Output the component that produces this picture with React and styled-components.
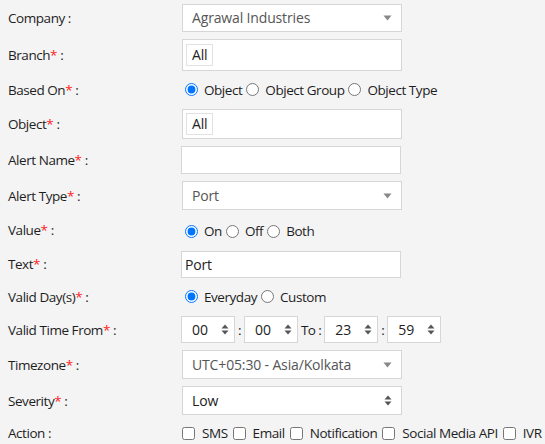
import React from "react";
import styled, { createGlobalStyle } from "styled-components";

const Global = createGlobalStyle`
  html, body { margin: 0; padding: 0; background: #f4f4f4; }
  body { font-family: "Open Sans", "Noto Sans", sans-serif; color: #222; }
  * { box-sizing: border-box; }
`;

const Form = styled.div`
  display: flex;
  flex-direction: column;
  gap: 7px;
  padding: 4px 0 0 8px;
  width: 545px;
  height: 444px;
  overflow: hidden;
`;

const Row = styled.div`
  display: grid;
  grid-template-columns: 174px 1fr;
  align-items: center;
  height: ${(p) => p.$h}px;
`;

const Label = styled.div`
  font-size: 13.5px;
  letter-spacing: -0.45px;
  color: #1e1e1e;
  white-space: nowrap;
`;

const Star = styled.span`
  color: #f22;
`;

const Box = styled.div`
  width: 220px;
  height: 100%;
  background: #fff;
  border: 1px solid #d6d6d6;
  display: flex;
  align-items: center;
  padding: 0 ${(p) => p.$pad ?? 9}px;
  font-size: 14px;
  letter-spacing: -0.15px;
  color: ${(p) => p.$color || "#555"};
  justify-content: space-between;
  margin-left: ${(p) => p.$ml ?? 0}px;
`;

const Tag = styled.div`
  height: 22px;
  padding: 0 5px;
  border: 1px solid #e2e2e2;
  background: #fff;
  display: flex;
  align-items: center;
  font-size: 14px;
  color: #222;
`;

const Choices = styled.div`
  display: flex;
  align-items: center;
  font-size: 13.5px;
  letter-spacing: -0.45px;
  color: #1e1e1e;
  margin-left: -1px;
  margin-top: ${(p) => p.$mt ?? 0}px;
  white-space: nowrap;
`;

const Radio = styled.input.attrs({ type: "radio" })`
  width: 13px;
  height: 13px;
  margin: 0 6px 0 4px;
`;

const Check = styled.input.attrs({ type: "checkbox" })`
  width: 13px;
  height: 13px;
  margin: 0 7px 0 ${(p) => (p.$first ? 1 : 5)}px;
`;

const TimeRow = styled.div`
  display: flex;
  align-items: center;
  height: 100%;
  margin-left: -1px;
  color: #222;
`;

const TimeBox = styled.div`
  width: 54px;
  height: 100%;
  background: #fff;
  border: 1px solid #d6d6d6;
  display: flex;
  align-items: center;
  justify-content: space-between;
  padding: 0 5px 0 10px;
  font-size: 14px;
  color: #222;
`;

const Sep = styled.span`
  margin: 0 3px;
  font-size: 13.5px;
  letter-spacing: -0.6px;
  color: #1e1e1e;
`;

const Caret = () => (
  <svg width="9" height="6" viewBox="0 0 9 6">
    <path d="M0.5 0.5 H8.5 L4.5 5.5 Z" fill="#888" />
  </svg>
);

const Spin = ({ color = "#555" }) => (
  <svg width="8" height="11" viewBox="0 0 8 11">
    <path d="M4 0.5 L7.5 4.5 H0.5 Z" fill={color} />
    <path d="M4 10.5 L7.5 6.5 H0.5 Z" fill={color} />
  </svg>
);

const L = ({ children, req }) => (
  <Label>
    {children}
    {req && <Star>*</Star>} :
  </Label>
);

export default function App() {
  return (
    <>
      <Global />
      <Form>
        <Row $h={28}>
          <L>Company</L>
          <Box>
            <span>Agrawal Industries</span>
            <Caret />
          </Box>
        </Row>
        <Row $h={32}>
          <L req>Branch</L>
          <Box $pad={3}>
            <Tag>All</Tag>
          </Box>
        </Row>
        <Row $h={24}>
          <L req>Based On</L>
          <Choices>
            <Radio name="b" defaultChecked />
            Object
            <Radio name="b" />
            Object Group
            <Radio name="b" />
            Object Type
          </Choices>
        </Row>
        <Row $h={31}>
          <L req>Object</L>
          <Box $pad={3}>
            <Tag>All</Tag>
          </Box>
        </Row>
        <Row $h={28}>
          <L req>Alert Name</L>
          <Box $ml={-1} />
        </Row>
        <Row $h={29}>
          <L req>Alert Type</L>
          <Box>
            <span>Port</span>
            <Caret />
          </Box>
        </Row>
        <Row $h={27}>
          <L req>Value</L>
          <Choices $mt={2}>
            <Radio name="v" defaultChecked />
            On
            <Radio name="v" />
            Off
            <Radio name="v" />
            Both
          </Choices>
        </Row>
        <Row $h={27}>
          <L req>Text</L>
          <Box $pad={3} $ml={-1} $color="#222">
            <span>Port</span>
          </Box>
        </Row>
        <Row $h={24}>
          <L req>Valid Day(s)</L>
          <Choices>
            <Radio name="d" defaultChecked />
            Everyday
            <Radio name="d" />
            Custom
          </Choices>
        </Row>
        <Row $h={28}>
          <L req>Valid Time From</L>
          <TimeRow>
            <TimeBox>
              <span>00</span>
              <Spin />
            </TimeBox>
            <Sep>:</Sep>
            <TimeBox>
              <span>00</span>
              <Spin />
            </TimeBox>
            <Sep>To :</Sep>
            <TimeBox>
              <span>23</span>
              <Spin />
            </TimeBox>
            <Sep>:</Sep>
            <TimeBox>
              <span>59</span>
              <Spin />
            </TimeBox>
          </TimeRow>
        </Row>
        <Row $h={29}>
          <L req>Timezone</L>
          <Box>
            <span>UTC+05:30 - Asia/Kolkata</span>
            <Caret />
          </Box>
        </Row>
        <Row $h={29}>
          <L req>Severity</L>
          <Box $color="#222">
            <span>Low</span>
            <Spin />
          </Box>
        </Row>
        <Row $h={22}>
          <Label>Action :</Label>
          <Choices>
            <Check $first />
            SMS
            <Check />
            Email
            <Check />
            Notification
            <Check />
            Social Media API
            <Check />
            IVR
          </Choices>
        </Row>
      </Form>
    </>
  );
}
